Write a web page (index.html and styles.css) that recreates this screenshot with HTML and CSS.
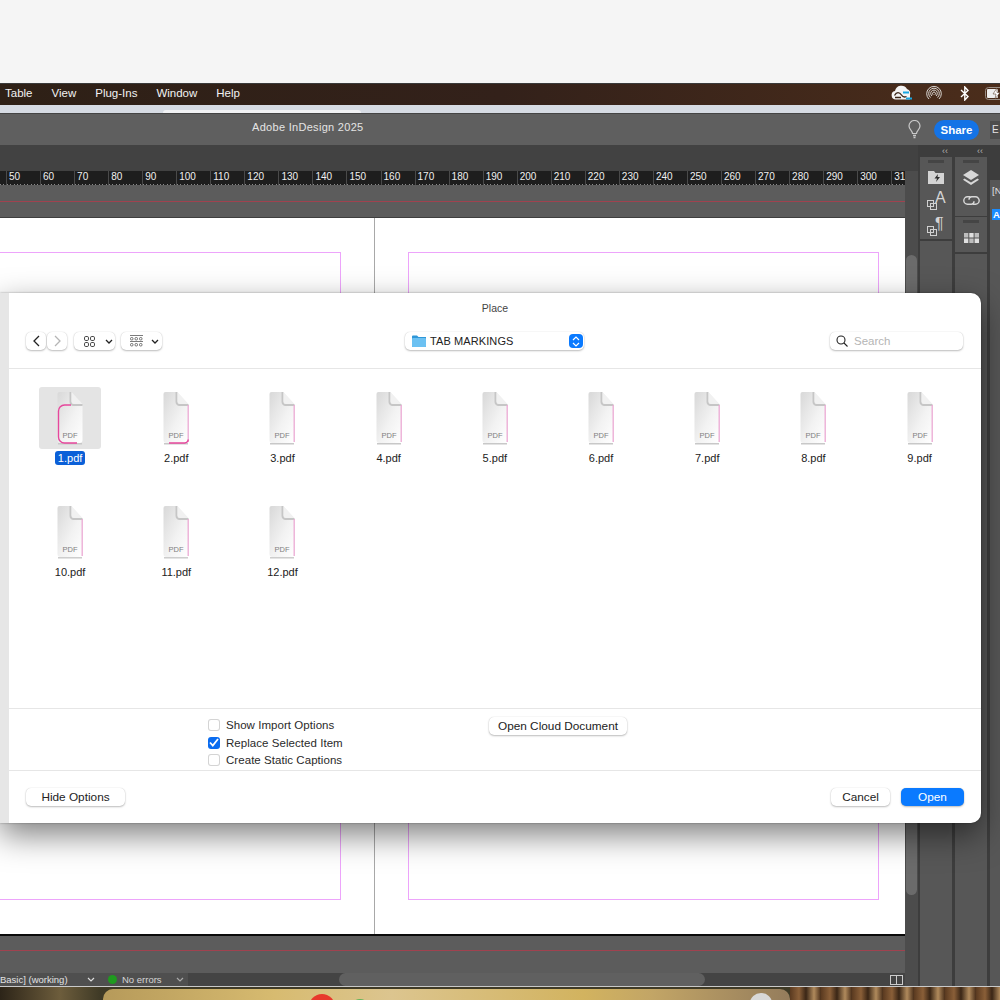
FILE: index.html
```html
<!DOCTYPE html>
<html lang="en">
<head>
  <meta charset="UTF-8">
  <title>Adobe InDesign 2025 - Place</title>
  <link rel="stylesheet" href="styles.css">
</head>
<body>
<svg class="defs" width="0" height="0">
  <defs>
    <linearGradient id="docfill" x1="0" y1="0" x2="1" y2="1">
      <stop offset="0" stop-color="#d8d8d8"/>
      <stop offset="0.55" stop-color="#f2f2f2"/>
      <stop offset="1" stop-color="#ffffff"/>
    </linearGradient>
    <symbol id="doc" viewBox="0 0 26 54">
      <path d="M1 52.800 H25" stroke="#c8c8c8" stroke-width="1.400" fill="none"/>
      <path d="M3 1 H14 L25.500 14 V49 a3 3 0 0 1 -3 3 H3.500 a3 3 0 0 1 -3 -3 V3 a2 2 0 0 1 2 -2 Z" fill="url(#docfill)"/>
      <path d="M13.500 1 V11 a3 3 0 0 0 3 3 H25.500" fill="none" stroke="#c6c6c6" stroke-width="2"/>
      <path d="M14.500 1 V10 a3 3 0 0 0 3 3 H25.500 Z" fill="#f1f1f1"/>
    </symbol>
    <symbol id="edge" viewBox="0 0 26 54">
      <path d="M25.200 14 V51" stroke="#eba9d4" stroke-width="1.300" fill="none"/>
    </symbol>
  </defs>
</svg>

<div class="app">
  <div class="blank"></div>

  <div class="menubar">
    <span>Table</span><span>View</span><span>Plug-Ins</span><span>Window</span><span>Help</span>
    <div class="tray">
      <svg class="tray-cc" width="22" height="16" viewBox="0 0 22 16"><path d="M5 14.500 a4.300 4.300 0 0 1 -1 -8.500 a6.500 6.500 0 0 1 12 -2 a5 5 0 0 1 3 6 V14.500 Z" fill="#f4f4f4"/><path d="M3.500 10.500 c2 -4 5 -3.500 7 -0.500 c1.500 2.300 3 2.500 5 1.500 M4 12.500 H10" fill="none" stroke="#3a2416" stroke-width="1.300"/><path d="M12 7.500 h6 M15 13.500 h6" stroke="#18a8e4" stroke-width="2"/></svg>
      <svg class="tray-air" width="16" height="16" viewBox="0 0 16 16" fill="none" stroke="#d8d4d0" stroke-width="1"><path d="M3 14 a7.300 7.300 0 1 1 10 0"/><path d="M4.500 12.500 a5.300 5.300 0 1 1 7 0"/><path d="M6 11 a3.300 3.300 0 1 1 4 0"/><path d="M7.200 9.800 a1.500 1.500 0 1 1 1.600 0"/></svg>
      <svg width="10" height="15" viewBox="0 0 10 15" fill="none" stroke="#fff" stroke-width="1.400"><path d="M1 4 L8 10.500 L4.800 14 V1 L8 4.500 L1 11"/></svg>
      <svg width="24" height="13" viewBox="0 0 24 13"><rect x="0.500" y="0.500" width="23" height="12" rx="3" fill="none" stroke="#9a8f86"/><rect x="2" y="2" width="11" height="9" rx="1" fill="#eee"/><path d="M12 1 L8 7 H11 L10 12 L15 5.500 H12 Z" fill="#fff" stroke="#4a2c1a" stroke-width="0.500"/></svg>
    </div>
  </div>

  <div class="band"><div class="band-tab"></div></div>

  <div class="titlebar">
    <span class="app-title">Adobe InDesign 2025</span>
    <svg class="bulb" width="13" height="19" viewBox="0 0 13 19" fill="none" stroke="#c8c8c8" stroke-width="1.200"><path d="M4.500 13.500 C4.500 10.500 1 9.500 1 6 a5.500 5.500 0 0 1 11 0 C12 9.500 8.500 10.500 8.500 13.500 Z"/><path d="M5 15.500 h3 M5.500 17.500 h2" stroke-width="1.500"/></svg>
    <span class="share">Share</span>
    <span class="essentials">E</span>
  </div>

  <div class="work">
    <div class="doc-col">
      <div class="subbar"></div>
      <div class="doc-row">
        <div class="doc-main">
          <div class="ruler">
            <span>50</span><span>60</span><span>70</span><span>80</span><span>90</span><span>100</span><span>110</span><span>120</span><span>130</span><span>140</span><span>150</span><span>160</span><span>170</span><span>180</span><span>190</span><span>200</span><span>210</span><span>220</span><span>230</span><span>240</span><span>250</span><span>260</span><span>270</span><span>280</span><span>290</span><span>300</span><span>31</span>
          </div>
          <div class="paste paste-top"></div>
          <div class="spread">
            <div class="page page-left"><div class="margins"></div></div>
            <div class="page page-right"><div class="margins"></div></div>
          </div>
          <div class="paste paste-bottom"></div>
          <div class="status">
            <div class="status-info">
              <span class="status-name">Basic] (working)</span>
              <svg width="8" height="5" viewBox="0 0 8 5"><path d="M1 1 L4 4 L7 1" fill="none" stroke="#ddd" stroke-width="1.200"/></svg>
              <span class="status-dot"></span>
              <span class="status-text">No errors</span>
              <svg width="8" height="5" viewBox="0 0 8 5"><path d="M1 1 L4 4 L7 1" fill="none" stroke="#aaa" stroke-width="1.200"/></svg>
            </div>
            <div class="hscroll">
              <div class="hthumb"></div>
              <svg class="spread-icon" width="13" height="10" viewBox="0 0 13 10" fill="none" stroke="#ccc"><rect x="0.500" y="0.500" width="12" height="9"/><path d="M6.500 0.500 V9.500"/></svg>
            </div>
          </div>
        </div>
        <div class="vscroll"><div class="vthumb"></div></div>
      </div>
    </div>

    <div class="docks">
      <div class="dock-col">
        <div class="collapse">‹‹</div>
        <div class="panel panel-a">
          <div class="grip"></div>
          <svg width="16" height="14" viewBox="0 0 16 14"><path d="M0 1 H6 L7.500 3 H16 V14 H0 Z" fill="#d4d4d4"/><path d="M10 4 L6.500 8.500 H9 L8 12 L12 7 H9.500 Z" fill="#2e2e2e"/></svg>
          <div class="style-icon">
            <svg width="10" height="10" viewBox="0 0 10 10" fill="none" stroke="#d0d0d0"><rect x="0.500" y="0.500" width="6" height="6"/><rect x="3.500" y="3.500" width="6" height="6"/></svg>
            <span class="style-a">A</span>
          </div>
          <div class="style-icon">
            <svg width="10" height="10" viewBox="0 0 10 10" fill="none" stroke="#d0d0d0"><rect x="0.500" y="0.500" width="6" height="6"/><rect x="3.500" y="3.500" width="6" height="6"/></svg>
            <span class="style-a">¶</span>
          </div>
        </div>
        <div class="panel panel-fill"></div>
      </div>

      <div class="dock-col">
        <div class="collapse">‹‹</div>
        <div class="panel panel-b">
          <div class="grip"></div>
          <svg width="16" height="15" viewBox="0 0 16 15" fill="#d8d8d8"><path d="M8 0 L16 5 L8 10 L0 5 Z"/><path d="M1.500 8.500 L8 12.500 L14.500 8.500 L16 9.700 L8 15 L0 9.700 Z"/></svg>
          <svg class="link-icon" width="17" height="9" viewBox="0 0 17 9" fill="none" stroke="#d8d8d8" stroke-width="1.400"><path d="M7.500 0.800 H4.500 a3.700 3.700 0 0 0 0 7.400 H8.500 a3 3 0 0 0 2.500 -3"/><path d="M9.500 8.200 H12.500 a3.700 3.700 0 0 0 0 -7.400 H8.500 a3 3 0 0 0 -2.500 3"/></svg>
        </div>
        <div class="panel panel-c">
          <div class="grip"></div>
          <svg width="15" height="10" viewBox="0 0 15 10" fill="#bdbdbd"><rect width="4.300" height="4.500"/><rect x="5.300" width="4.300" height="4.500" fill="#e0e0e0"/><rect x="10.600" width="4.400" height="4.500"/><rect y="5.500" width="4.300" height="4.500" fill="#e0e0e0"/><rect x="5.300" y="5.500" width="4.300" height="4.500"/><rect x="10.600" y="5.500" width="4.400" height="4.500" fill="#e0e0e0"/></svg>
        </div>
        <div class="panel panel-fill"></div>
      </div>

      <div class="dock-list">
        <span>[N</span>
        <span class="swatch-pick">A</span>
      </div>
    </div>
  </div>

  <div class="desktop">
    <div class="dock-bar">
      <span class="dock-red"></span>
      <span class="dock-green"></span>
      <span class="dock-app"></span>
    </div>
    <div class="wall"></div>
  </div>
</div>

<div class="dialog">
  <div class="dlg-strip"></div>
  <div class="dlg-main">
    <div class="dlg-head">
      <div class="dlg-title">Place</div>
      <div class="toolbar">
        <div class="nav-pair">
          <span class="tool tool-nav"><svg width="7" height="12" viewBox="0 0 7 12"><path d="M6 1 L1 6 L6 11" fill="none" stroke="#222" stroke-width="1.300"/></svg></span>
          <span class="tool tool-nav"><svg width="7" height="12" viewBox="0 0 7 12"><path d="M1 1 L6 6 L1 11" fill="none" stroke="#b5b5b5" stroke-width="1.300"/></svg></span>
        </div>
        <span class="tool tool-view">
          <svg width="11" height="11" viewBox="0 0 11 11" fill="none" stroke="#333" stroke-width="0.900"><rect x="0.500" y="0.500" width="4" height="4" rx="1.300"/><rect x="6.500" y="0.500" width="4" height="4" rx="1.300"/><rect x="0.500" y="6.500" width="4" height="4" rx="1.300"/><rect x="6.500" y="6.500" width="4" height="4" rx="1.300"/></svg>
          <svg width="8" height="5" viewBox="0 0 8 5"><path d="M1 1 L4 4 L7 1" fill="none" stroke="#222" stroke-width="1.300"/></svg>
        </span>
        <span class="tool tool-group">
          <svg width="13" height="12" viewBox="0 0 13 12" fill="none" stroke="#444" stroke-width="0.700"><path d="M0 0.500 H13"/><rect x="0.500" y="2.500" width="2.500" height="2.500" rx="1"/><rect x="5" y="2.500" width="2.500" height="2.500" rx="1"/><rect x="9.500" y="2.500" width="2.500" height="2.500" rx="1"/><path d="M0 6.500 H13"/><rect x="0.500" y="8.500" width="2.500" height="2.500" rx="1"/><rect x="5" y="8.500" width="2.500" height="2.500" rx="1"/><rect x="9.500" y="8.500" width="2.500" height="2.500" rx="1"/></svg>
          <svg width="8" height="5" viewBox="0 0 8 5"><path d="M1 1 L4 4 L7 1" fill="none" stroke="#222" stroke-width="1.300"/></svg>
        </span>
        <span class="tool popup">
          <svg width="14" height="12" viewBox="0 0 14 12"><path d="M0 1.500 a1 1 0 0 1 1 -1 H5 L6.500 2 H14 V11 a1 1 0 0 1 -1 1 H1 a1 1 0 0 1 -1 -1 Z" fill="#2f97d8"/><rect y="3" width="14" height="9" rx="1" fill="#6cc1f2"/></svg>
          <span class="popup-name">TAB MARKINGS</span>
          <span class="popup-arrows"><svg width="8" height="11" viewBox="0 0 8 11" fill="none" stroke="#fff" stroke-width="1.200"><path d="M1 4 L4 1 L7 4 M1 7 L4 10 L7 7"/></svg></span>
        </span>
        <span class="tool search">
          <svg width="12" height="12" viewBox="0 0 12 12" fill="none" stroke="#222" stroke-width="1.100"><circle cx="5" cy="5" r="4"/><path d="M8 8 L11.500 11.500"/></svg>
          <span class="search-text">Search</span>
        </span>
      </div>
    </div>

    <div class="files">
      <div class="file selected">
        <div class="thumb">
          <svg class="doc-icon" width="26" height="54" viewBox="0 0 26 54"><use href="#doc" width="26" height="54"/><path d="M14 14 H7.500 a6 6 0 0 0 -6 6 V46 a6 6 0 0 0 6 6 H20" fill="none" stroke="#e6479c" stroke-width="1.400"/><text class="doc-type" x="13" y="47">PDF</text></svg>
        </div>
        <span class="file-name">1.pdf</span>
      </div>
      <div class="file">
        <div class="thumb">
          <svg class="doc-icon" width="26" height="54" viewBox="0 0 26 54"><use href="#doc" width="26" height="54"/><use href="#edge" width="26" height="54"/><path d="M6 52 H21.500 a3.500 3.500 0 0 0 3.700 -3.500" fill="none" stroke="#e6479c" stroke-width="1.400"/><text class="doc-type" x="13" y="47">PDF</text></svg>
        </div>
        <span class="file-name">2.pdf</span>
      </div>
      <div class="file">
        <div class="thumb"><svg class="doc-icon" width="26" height="54" viewBox="0 0 26 54"><use href="#doc" width="26" height="54"/><use href="#edge" width="26" height="54"/><text class="doc-type" x="13" y="47">PDF</text></svg></div>
        <span class="file-name">3.pdf</span>
      </div>
      <div class="file">
        <div class="thumb"><svg class="doc-icon" width="26" height="54" viewBox="0 0 26 54"><use href="#doc" width="26" height="54"/><use href="#edge" width="26" height="54"/><text class="doc-type" x="13" y="47">PDF</text></svg></div>
        <span class="file-name">4.pdf</span>
      </div>
      <div class="file">
        <div class="thumb"><svg class="doc-icon" width="26" height="54" viewBox="0 0 26 54"><use href="#doc" width="26" height="54"/><use href="#edge" width="26" height="54"/><text class="doc-type" x="13" y="47">PDF</text></svg></div>
        <span class="file-name">5.pdf</span>
      </div>
      <div class="file">
        <div class="thumb"><svg class="doc-icon" width="26" height="54" viewBox="0 0 26 54"><use href="#doc" width="26" height="54"/><use href="#edge" width="26" height="54"/><text class="doc-type" x="13" y="47">PDF</text></svg></div>
        <span class="file-name">6.pdf</span>
      </div>
      <div class="file">
        <div class="thumb"><svg class="doc-icon" width="26" height="54" viewBox="0 0 26 54"><use href="#doc" width="26" height="54"/><use href="#edge" width="26" height="54"/><text class="doc-type" x="13" y="47">PDF</text></svg></div>
        <span class="file-name">7.pdf</span>
      </div>
      <div class="file">
        <div class="thumb"><svg class="doc-icon" width="26" height="54" viewBox="0 0 26 54"><use href="#doc" width="26" height="54"/><use href="#edge" width="26" height="54"/><text class="doc-type" x="13" y="47">PDF</text></svg></div>
        <span class="file-name">8.pdf</span>
      </div>
      <div class="file">
        <div class="thumb"><svg class="doc-icon" width="26" height="54" viewBox="0 0 26 54"><use href="#doc" width="26" height="54"/><use href="#edge" width="26" height="54"/><text class="doc-type" x="13" y="47">PDF</text></svg></div>
        <span class="file-name">9.pdf</span>
      </div>
      <div class="file">
        <div class="thumb"><svg class="doc-icon" width="26" height="54" viewBox="0 0 26 54"><use href="#doc" width="26" height="54"/><use href="#edge" width="26" height="54"/><text class="doc-type" x="13" y="47">PDF</text></svg></div>
        <span class="file-name">10.pdf</span>
      </div>
      <div class="file">
        <div class="thumb"><svg class="doc-icon" width="26" height="54" viewBox="0 0 26 54"><use href="#doc" width="26" height="54"/><use href="#edge" width="26" height="54"/><text class="doc-type" x="13" y="47">PDF</text></svg></div>
        <span class="file-name">11.pdf</span>
      </div>
      <div class="file">
        <div class="thumb"><svg class="doc-icon" width="26" height="54" viewBox="0 0 26 54"><use href="#doc" width="26" height="54"/><use href="#edge" width="26" height="54"/><text class="doc-type" x="13" y="47">PDF</text></svg></div>
        <span class="file-name">12.pdf</span>
      </div>
    </div>

    <div class="options">
      <div class="checks">
        <div class="check-row"><span class="check"></span>Show Import Options</div>
        <div class="check-row"><span class="check on"><svg width="10" height="9" viewBox="0 0 10 9"><path d="M1 4.500 L3.800 7.500 L9 1" fill="none" stroke="#fff" stroke-width="1.800"/></svg></span>Replace Selected Item</div>
        <div class="check-row"><span class="check"></span>Create Static Captions</div>
      </div>
      <span class="btn btn-cloud">Open Cloud Document</span>
    </div>

    <div class="dlg-foot">
      <span class="btn btn-hide">Hide Options</span>
      <div class="foot-right">
        <span class="btn btn-cancel">Cancel</span>
        <span class="btn btn-open">Open</span>
      </div>
    </div>
  </div>
</div>
</body>
</html>
```

FILE: styles.css
```css
* {
  box-sizing: border-box;
}

body {
  margin: 0;
  width: 1000px;
  height: 1000px;
  overflow: hidden;
  position: relative;
  font-family: "Liberation Sans", Arial, sans-serif;
  background-color: #f5f5f5;
}

.defs {
  position: absolute;
}

svg {
  display: block;
  flex: none;
}

.app {
  display: flex;
  flex-direction: column;
  height: 1000px;
}

.blank {
  height: 83px;
  background-color: #f5f5f5;
}

/* mac menu bar */
.menubar {
  height: 22px;
  display: flex;
  align-items: center;
  gap: 19px;
  padding-left: 5px;
  padding-bottom: 3px;
  font-size: 11.500px;
  color: #f2f2f2;
  background: linear-gradient(90deg, #2e2016 0%, #33211a 50%, #4b2d1b 100%);
  border-top: 1px solid #3a3a3a;
}

.tray {
  display: flex;
  align-items: center;
  margin-left: auto;
  gap: 15px;
  margin-right: -9px;
}

.tray-cc {
  margin-right: -2px;
}

.tray-air {
  margin-right: 3px;
}

.band {
  height: 8px;
  background-color: #d6dbe3;
  display: flex;
  align-items: flex-end;
}

.band-tab {
  margin-left: 163px;
  width: 198px;
  height: 3px;
  background-color: #f1f2f4;
  border-radius: 4px 4px 0 0;
}

.titlebar {
  height: 32px;
  display: flex;
  align-items: center;
  background-color: #5f5f5f;
  border-top: 1px solid #444;
  color: #e4e4e4;
}

.app-title {
  margin-left: 252px;
  margin-top: -5px;
  font-size: 11px;
  letter-spacing: 0.300px;
  white-space: nowrap;
}

.bulb {
  margin-left: auto;
}

.share {
  margin-left: 13px;
  width: 45px;
  height: 20px;
  border-radius: 10px;
  background-color: #1473e6;
  color: #fff;
  font-size: 11.500px;
  font-weight: bold;
  text-align: center;
  line-height: 20px;
}

.essentials {
  margin-left: 11px;
  width: 10px;
  height: 18px;
  background-color: #4d4d4d;
  font-size: 10px;
  line-height: 18px;
  padding-left: 2px;
}

.work {
  height: 841px;
  display: flex;
  background-color: #424242;
}

.doc-col {
  width: 918px;
  display: flex;
  flex-direction: column;
}

.subbar {
  height: 26px;
  background-color: #424242;
}

.doc-row {
  display: flex;
  flex: 1;
}

.doc-main {
  width: 905px;
  display: flex;
  flex-direction: column;
}

.ruler {
  flex: none;
  height: 14px;
  display: flex;
  padding-left: 6px;
  overflow: hidden;
  background-color: #1e1e1e;
  background-image: repeating-linear-gradient(90deg, #8a8a8a 0, #8a8a8a 1px, transparent 1px, transparent 3.405px);
  background-size: 100% 1px;
  background-position: 0 100%;
  background-repeat: no-repeat;
}

.ruler span {
  flex: 0 0 34.050px;
  padding-left: 2px;
  border-left: 1px solid #4a4a4a;
  font-size: 10px;
  line-height: 12px;
  color: #f0f0f0;
}

/* the red guide is a 1px band of the background */
.paste {
  flex: none;
  background-color: #5c5c5c;
  background-image: linear-gradient(#a0424f, #a0424f);
  background-size: 100% 1px;
  background-repeat: no-repeat;
}

.paste-top {
  height: 33px;
  background-position: 0 16px;
  border-bottom: 1px solid #3e3e3e;
}

.paste-bottom {
  height: 39px;
  background-position: 0 14px;
  border-top: 2px solid #0a0a0a;
}

.spread {
  flex: none;
  height: 716px;
  display: flex;
  background-color: #fff;
}

.page {
  height: 100%;
  padding-top: 34px;
  padding-bottom: 34px;
}

.page-left {
  width: 375px;
  padding-right: 33px;
  border-right: 1px solid #a8a8a8;
}

.page-right {
  width: 530px;
  padding-left: 33px;
  padding-right: 26px;
}

.margins {
  height: 100%;
  border: 1px solid #eda4fb;
}

.page-left .margins {
  margin-left: -2px;
}

.status {
  flex: none;
  height: 13px;
  display: flex;
  background-color: #444;
}

.status-info {
  width: 188px;
  display: flex;
  align-items: center;
  background-color: #4f4f4f;
  font-size: 9.500px;
  color: #e2e2e2;
}

.status-name {
  width: 87px;
}

.status-dot {
  width: 9px;
  height: 9px;
  margin-left: 13px;
  border-radius: 50%;
  background-color: #1f9a1f;
}

.status-text {
  width: 54px;
  margin-left: 5px;
  color: #d6d6d6;
}

.hscroll {
  flex: 1;
  display: flex;
  align-items: center;
}

.hthumb {
  width: 366px;
  height: 13px;
  margin-left: 151px;
  border-radius: 7px;
  background-color: #606060;
}

.spread-icon {
  margin-left: 185px;
}

.vscroll {
  width: 13px;
  background-color: #4c4c4c;
  padding: 84px 1px 0;
}

.vthumb {
  height: 640px;
  border-radius: 6px;
  background-color: #6b6b6b;
}

/* panel docks */
.docks {
  flex: 1;
  display: flex;
  padding-left: 2px;
  gap: 3px;
  background-color: #3d3d3d;
}

.dock-col {
  width: 32px;
  display: flex;
  flex-direction: column;
  gap: 2px;
}

.collapse {
  height: 10px;
  margin-top: 2px;
  margin-bottom: -2px;
  text-align: right;
  padding-right: 4px;
  font-size: 9px;
  line-height: 9px;
  color: #b5b5b5;
}

.panel {
  display: flex;
  flex-direction: column;
  align-items: center;
  background-color: #575757;
}

.panel-a {
  height: 82px;
  gap: 7px;
}

.panel-a .grip {
  margin-bottom: 0;
}

.panel-b {
  height: 59px;
  gap: 6px;
  margin-bottom: -1px;
}

.link-icon {
  margin-top: 5px;
}

.panel-c {
  height: 35px;
  gap: 9px;
}

.panel-fill {
  flex: 1;
}

.grip {
  width: 16px;
  height: 3px;
  margin-top: 3px;
  margin-bottom: 1px;
  background-color: #454545;
}

.style-icon {
  width: 18px;
  height: 17px;
  margin-top: 2px;
  display: flex;
  align-items: flex-end;
  color: #d4d4d4;
}

.style-a {
  margin-left: -2px;
  margin-bottom: 4px;
  font-size: 16px;
  line-height: 16px;
}

.dock-list {
  flex: 1;
  display: flex;
  flex-direction: column;
  margin-top: 35px;
  padding-left: 2px;
  padding-top: 5px;
  background-color: #575757;
  font-size: 9.500px;
  color: #e0e0e0;
  overflow: hidden;
}

.swatch-pick {
  width: 8px;
  margin-top: 13px;
  background-color: #1a8cff;
  color: #fff;
  font-weight: bold;
  padding-left: 1px;
}

.desktop {
  height: 14px;
  display: flex;
  overflow: hidden;
  border-top: 1px solid #c9c9c9;
  background: linear-gradient(90deg, #2c2418 0, #6d5d3c 6%, #3f3a26 10%);
}

.dock-bar {
  width: 687px;
  height: 14px;
  margin-left: 103px;
  margin-top: 2px;
  display: flex;
  border-radius: 10px 10px 0 0;
  background: linear-gradient(90deg, #b69a5a 0%, #d7bb70 25%, #dcc58f 42%, #d2b35f 70%, #c2a566 80%, #947c5c 100%);
}

.dock-red {
  width: 26px;
  height: 26px;
  margin-left: 206px;
  margin-top: 5px;
  border-radius: 50%;
  background-color: #e8382c;
}

.dock-green {
  width: 20px;
  height: 20px;
  margin-left: 15px;
  margin-top: 10px;
  border-radius: 50%;
  background-color: #62b55a;
}

.dock-app {
  width: 22px;
  height: 20px;
  margin-left: 380px;
  margin-top: 4px;
  border-radius: 50%;
  background-color: #d8d8d8;
}

.wall {
  flex: 1;
  background: repeating-linear-gradient(90deg, #5a3a20 0, #8a5f38 9px, #3a2616 16px, #b08a5c 24px, #4a2f1a 31px);
}

/* Place dialog */
.dialog {
  position: absolute;
  left: 0;
  top: 293px;
  width: 981px;
  height: 530px;
  display: flex;
  background-color: #fff;
  border-radius: 0 10px 10px 0;
  box-shadow: 0 12px 32px rgba(0, 0, 0, 0.5), 0 0 2px rgba(0, 0, 0, 0.4);
  overflow: hidden;
}

.dlg-strip {
  width: 9px;
  background-color: #e6e6e6;
}

.dlg-main {
  flex: 1;
  display: flex;
  flex-direction: column;
  color: #222;
}

.dlg-head {
  height: 76px;
  border-bottom: 1px solid #e6e6e6;
}

.dlg-title {
  height: 39px;
  padding-top: 9px;
  font-size: 10.500px;
  line-height: 13px;
  text-align: center;
  color: #444;
}

.toolbar {
  display: flex;
  align-items: center;
  padding-left: 17px;
  padding-right: 18px;
}

.nav-pair {
  display: flex;
  gap: 1px;
}

.tool {
  height: 18px;
  display: flex;
  align-items: center;
  background-color: #fff;
  border-radius: 5px;
  box-shadow: 0 1px 2px rgba(0, 0, 0, 0.25), 0 0 1px rgba(0, 0, 0, 0.2);
}

.tool-nav {
  width: 20px;
  justify-content: center;
}

.tool-view {
  width: 41px;
  margin-left: 7px;
  padding-left: 10px;
  gap: 10px;
}

.tool-group {
  width: 41px;
  margin-left: 6px;
  padding-left: 9px;
  gap: 8px;
}

.popup {
  width: 179px;
  margin-left: 243px;
  padding-left: 7px;
}

.popup-name {
  margin-left: 4px;
  font-size: 11px;
  letter-spacing: 0.100px;
  color: #222;
}

.popup-arrows {
  width: 14px;
  height: 14px;
  margin-left: auto;
  margin-right: 1px;
  display: flex;
  align-items: center;
  justify-content: center;
  border-radius: 4px;
  background-color: #0a7aff;
}

.search {
  width: 133px;
  margin-left: auto;
  padding-left: 6px;
  gap: 6px;
}

.search-text {
  font-size: 11.500px;
  color: #b5b5b5;
}

.files {
  flex: 1;
  display: grid;
  grid-template-columns: repeat(9, 106.200px);
  grid-auto-rows: 114px;
  padding-top: 18px;
  padding-left: 8px;
}

.file {
  display: flex;
  flex-direction: column;
  align-items: center;
}

.thumb {
  width: 62px;
  height: 62px;
  display: flex;
  justify-content: center;
  padding-top: 4px;
  border-radius: 3px;
}

.selected .thumb {
  background-color: #e4e4e4;
}

.doc-type {
  font-family: "Liberation Sans", Arial, sans-serif;
  font-size: 7.500px;
  fill: #808080;
  text-anchor: middle;
}

.file-name {
  margin-top: 2px;
  padding: 0 3px;
  height: 14px;
  line-height: 14px;
  font-size: 11px;
  color: #222;
  border-radius: 3px;
}

.selected .file-name {
  background-color: #0b60d8;
  color: #fff;
}

.options {
  height: 63px;
  display: flex;
  align-items: flex-start;
  border-top: 1px solid #e6e6e6;
  border-bottom: 1px solid #e6e6e6;
}

.checks {
  width: 281px;
  margin-left: 199px;
  padding-top: 7.500px;
}

.check-row {
  height: 17.500px;
  display: flex;
  align-items: center;
  gap: 6px;
  font-size: 11.500px;
  letter-spacing: 0.050px;
  color: #2a2a2a;
}

.check {
  width: 12px;
  height: 12px;
  display: flex;
  align-items: center;
  justify-content: center;
  border-radius: 3px;
  background-color: #fff;
  box-shadow: inset 0 0 0 1px #d4d4d4;
}

.check.on {
  background-color: #0a6cf0;
  box-shadow: none;
}

.btn {
  height: 18px;
  display: flex;
  align-items: center;
  justify-content: center;
  background-color: #fff;
  border-radius: 5px;
  font-size: 11.800px;
  color: #222;
  box-shadow: 0 1px 2px rgba(0, 0, 0, 0.25), 0 0 1px rgba(0, 0, 0, 0.2);
}

.btn-cloud {
  width: 138px;
  margin-top: 8px;
}

.dlg-foot {
  flex: none;
  height: 52px;
  display: flex;
  justify-content: space-between;
  padding: 17px 17px 0;
}

.foot-right {
  display: flex;
  gap: 11px;
}

.btn-hide {
  width: 99px;
}

.btn-cancel {
  width: 59px;
}

.btn-open {
  width: 63px;
  background-color: #0a7aff;
  color: #fff;
}
```
